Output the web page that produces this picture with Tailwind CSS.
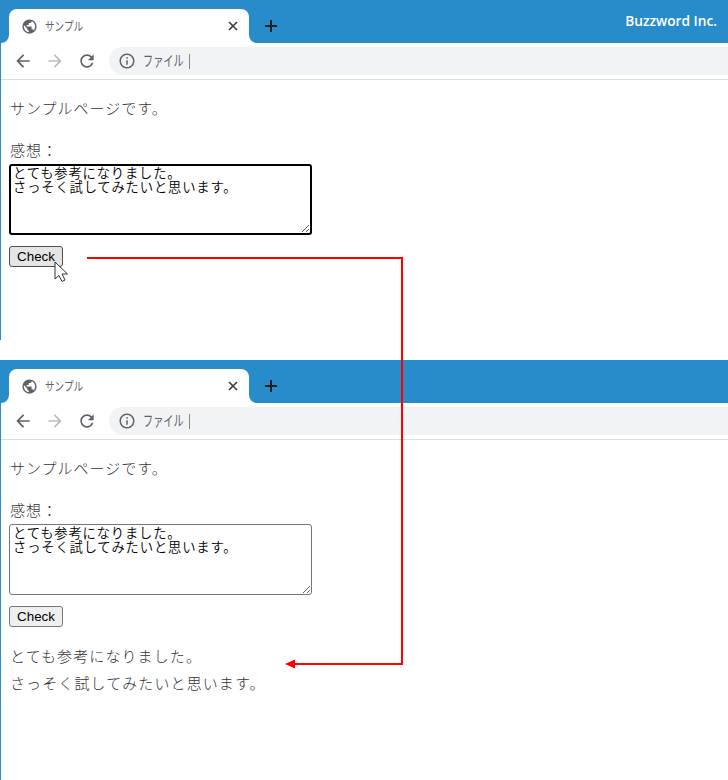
<!DOCTYPE html>
<html lang="ja">
<head>
<meta charset="utf-8">
<script src="https://cdn.jsdelivr.net/npm/@tailwindcss/browser@4"></script>
</head>
<body class="bg-white">
<div class="relative w-[728px] h-[780px] overflow-hidden flex flex-col font-['Noto_Sans_CJK_JP','Noto_Sans',sans-serif] bg-white">

  <!-- window 1 -->
  <section class="h-[340px] border-l border-l-[#288cca] flex flex-col">
    <div class="relative h-[43px] bg-[#288cca] flex items-end pl-2 shrink-0">
      <div class="relative w-[240px] h-[34px] bg-white rounded-t-lg flex items-center pl-[13px] pr-[11px]">
        <span class="absolute left-[-8px] bottom-0 w-2 h-2 bg-white"><span class="block w-2 h-2 bg-[#288cca] rounded-br-lg"></span></span>
        <span class="absolute right-[-8px] bottom-0 w-2 h-2 bg-white"><span class="block w-2 h-2 bg-[#288cca] rounded-bl-lg"></span></span>
        <svg class="w-[17px] h-[17px] ml-[-1.5px] shrink-0" viewBox="0 0 24 24" fill="#5f6368"><path d="M12 2C6.48 2 2 6.48 2 12s4.48 10 10 10 10-4.48 10-10S17.52 2 12 2zm-1 17.93c-3.95-.49-7-3.85-7-7.93 0-.62.08-1.21.21-1.79L9 15v1c0 1.1.9 2 2 2v1.93zm6.9-2.54c-.26-.81-1-1.39-1.9-1.39h-1v-3c0-.55-.45-1-1-1H8v-2h2c.55 0 1-.45 1-1V7h2c1.1 0 2-.9 2-2v-.41c2.93 1.19 5 4.06 5 7.41 0 2.08-.8 3.97-2.1 5.39z"/></svg>
        <span class="ml-[7.5px] text-[12px] leading-4 text-[#5f6368] inline-block origin-left scale-x-[.8] whitespace-nowrap">サンプル</span>
        <svg class="ml-auto w-[10px] h-[10px]" viewBox="0 0 10 10" stroke="#3c4043" stroke-width="1.7" fill="none"><path d="M1 1l8 8M9 1l-8 8"/></svg>
      </div>
      <svg class="ml-[15px] mb-[10px] w-[14px] h-[14px]" viewBox="0 0 14 14" stroke="#202124" stroke-width="2" fill="none"><path d="M7 1v12M1 7h12"/></svg>
      <span class="ml-auto mr-[11px] self-start mt-[11px] font-['Open_Sans'] font-semibold text-[13.700px] leading-5 text-white">Buzzword Inc.</span>
    </div>
    <div class="h-[37px] border-b border-b-[#dadce0] bg-white flex items-center shrink-0 pl-[12px]">
      <svg class="w-5 h-5" viewBox="0 0 24 24" fill="#5f6368"><path d="M20 11H7.83l5.59-5.59L12 4l-8 8 8 8 1.41-1.41L7.83 13H20v-2z"/></svg>
      <svg class="w-5 h-5 ml-3" viewBox="0 0 24 24" fill="#bdbdbd"><path d="M4 11h12.170l-5.590-5.590L12 4l8 8-8 8-1.410-1.410L16.170 13H4v-2z"/></svg>
      <svg class="w-5 h-5 ml-3" viewBox="0 0 24 24" fill="#5f6368"><path d="M17.65 6.35C16.2 4.9 14.21 4 12 4c-4.42 0-7.99 3.58-7.99 8s3.57 8 7.99 8c3.73 0 6.84-2.55 7.73-6h-2.08c-.82 2.33-3.04 4-5.65 4-3.31 0-6-2.69-6-6s2.69-6 6-6c1.66 0 3.14.69 4.22 1.78L13 11h7V4l-2.35 2.35z"/></svg>
      <div class="ml-[12px] flex-1 h-[28px] bg-[#f1f3f4] rounded-l-[14px] flex items-center pl-[9px]">
        <svg class="w-[18px] h-[18px]" viewBox="0 0 24 24" fill="#5f6368"><path d="M11 7h2v2h-2zm0 4h2v6h-2zm1-9C6.48 2 2 6.48 2 12s4.48 10 10 10 10-4.48 10-10S17.52 2 12 2zm0 18c-4.41 0-8-3.59-8-8s3.59-8 8-8 8 3.59 8 8-3.59 8-8 8z"/></svg>
        <span class="ml-[7px] mb-[2px] w-[40px] text-[14.500px] leading-5 text-[#5f6368] inline-block origin-left scale-x-[.7] whitespace-nowrap">ファイル</span>
        <span class="ml-[6px] w-px h-[15px] bg-[#80868b]"></span>
      </div>
    </div>
    <div class="pl-[8px] pt-[14px] text-[15px] leading-[27px] tracking-[1px] text-[#333] font-light">
      <p class="pl-px">サンプルページです。</p>
      <p class="pl-px mt-[15px]">感想：</p>
      <textarea class="block mt-[1px] w-[303px] h-[71px] bg-white border-2 border-black rounded-[3px] px-[2px] py-0 font-['Noto_Sans_CJK_JP',monospace] font-[350] text-[13.33px] leading-[14px] tracking-[0.8px] text-black outline-none">とても参考になりました。
さっそく試してみたいと思います。</textarea>
      <button class="block mt-[11px] w-[54px] h-[21px] bg-[#e5e5e5] border border-[#4f4f4f] rounded-[3px] font-['Liberation_Sans'] font-normal text-[13.33px] leading-[15px] tracking-normal text-black">Check</button>
    </div>
  </section>

  <!-- window 2 -->
  <section class="mt-[20px] h-[420px] border-l border-l-[#288cca] flex flex-col">
    <div class="relative h-[43px] bg-[#288cca] flex items-end pl-2 shrink-0">
      <div class="relative w-[240px] h-[34px] bg-white rounded-t-lg flex items-center pl-[13px] pr-[11px]">
        <span class="absolute left-[-8px] bottom-0 w-2 h-2 bg-white"><span class="block w-2 h-2 bg-[#288cca] rounded-br-lg"></span></span>
        <span class="absolute right-[-8px] bottom-0 w-2 h-2 bg-white"><span class="block w-2 h-2 bg-[#288cca] rounded-bl-lg"></span></span>
        <svg class="w-[17px] h-[17px] ml-[-1.5px] shrink-0" viewBox="0 0 24 24" fill="#5f6368"><path d="M12 2C6.48 2 2 6.48 2 12s4.48 10 10 10 10-4.48 10-10S17.52 2 12 2zm-1 17.93c-3.95-.49-7-3.85-7-7.93 0-.62.08-1.21.21-1.79L9 15v1c0 1.1.9 2 2 2v1.93zm6.9-2.54c-.26-.81-1-1.39-1.9-1.39h-1v-3c0-.55-.45-1-1-1H8v-2h2c.55 0 1-.45 1-1V7h2c1.1 0 2-.9 2-2v-.41c2.93 1.19 5 4.06 5 7.41 0 2.08-.8 3.97-2.1 5.39z"/></svg>
        <span class="ml-[7.5px] text-[12px] leading-4 text-[#5f6368] inline-block origin-left scale-x-[.8] whitespace-nowrap">サンプル</span>
        <svg class="ml-auto w-[10px] h-[10px]" viewBox="0 0 10 10" stroke="#3c4043" stroke-width="1.7" fill="none"><path d="M1 1l8 8M9 1l-8 8"/></svg>
      </div>
      <svg class="ml-[15px] mb-[10px] w-[14px] h-[14px]" viewBox="0 0 14 14" stroke="#202124" stroke-width="2" fill="none"><path d="M7 1v12M1 7h12"/></svg>
    </div>
    <div class="h-[37px] border-b border-b-[#dadce0] bg-white flex items-center shrink-0 pl-[12px]">
      <svg class="w-5 h-5" viewBox="0 0 24 24" fill="#5f6368"><path d="M20 11H7.83l5.59-5.59L12 4l-8 8 8 8 1.41-1.41L7.83 13H20v-2z"/></svg>
      <svg class="w-5 h-5 ml-3" viewBox="0 0 24 24" fill="#bdbdbd"><path d="M4 11h12.170l-5.590-5.590L12 4l8 8-8 8-1.410-1.410L16.170 13H4v-2z"/></svg>
      <svg class="w-5 h-5 ml-3" viewBox="0 0 24 24" fill="#5f6368"><path d="M17.65 6.35C16.2 4.9 14.21 4 12 4c-4.42 0-7.99 3.58-7.99 8s3.57 8 7.99 8c3.73 0 6.84-2.55 7.73-6h-2.08c-.82 2.33-3.04 4-5.65 4-3.31 0-6-2.69-6-6s2.69-6 6-6c1.66 0 3.14.69 4.22 1.78L13 11h7V4l-2.35 2.35z"/></svg>
      <div class="ml-[12px] flex-1 h-[28px] bg-[#f1f3f4] rounded-l-[14px] flex items-center pl-[9px]">
        <svg class="w-[18px] h-[18px]" viewBox="0 0 24 24" fill="#5f6368"><path d="M11 7h2v2h-2zm0 4h2v6h-2zm1-9C6.48 2 2 6.48 2 12s4.48 10 10 10 10-4.48 10-10S17.52 2 12 2zm0 18c-4.41 0-8-3.59-8-8s3.59-8 8-8 8 3.59 8 8-3.59 8-8 8z"/></svg>
        <span class="ml-[7px] mb-[2px] w-[40px] text-[14.500px] leading-5 text-[#5f6368] inline-block origin-left scale-x-[.7] whitespace-nowrap">ファイル</span>
        <span class="ml-[6px] w-px h-[15px] bg-[#80868b]"></span>
      </div>
    </div>
    <div class="pl-[8px] pt-[14px] text-[15px] leading-[27px] tracking-[1px] text-[#333] font-light">
      <p class="pl-px">サンプルページです。</p>
      <p class="pl-px mt-[15px]">感想：</p>
      <textarea class="block mt-[1px] w-[303px] h-[71px] bg-white border border-[#767676] rounded-[3px] px-[3px] py-px font-['Noto_Sans_CJK_JP',monospace] font-[350] text-[13.33px] leading-[14px] tracking-[0.8px] text-black outline-none">とても参考になりました。
さっそく試してみたいと思います。</textarea>
      <button class="block mt-[11px] w-[54px] h-[21px] bg-[#efefef] border border-[#767676] rounded-[3px] font-['Liberation_Sans'] font-normal text-[13.33px] leading-[15px] tracking-normal text-black">Check</button>
      <p class="pl-px mt-[15px] tracking-[1.1px]">とても参考になりました。</p>
      <p class="pl-px tracking-[1.1px]">さっそく試してみたいと思います。</p>
    </div>
  </section>

  <!-- annotation overlay -->
  <svg class="absolute left-0 top-0 pointer-events-none" width="728" height="780" viewBox="0 0 728 780" fill="none">
    <path d="M87 258H402V664H295" stroke="#ff0000" stroke-width="2"/>
    <path d="M285 664l10-4.500v9z" fill="#ff0000"/>
    <path d="M55 262v17l4-3.500 3 6 3-1.500-3-6h5.500z" fill="#fff" stroke="#333" stroke-width="1"/>
  </svg>
</div>
</body>
</html>
